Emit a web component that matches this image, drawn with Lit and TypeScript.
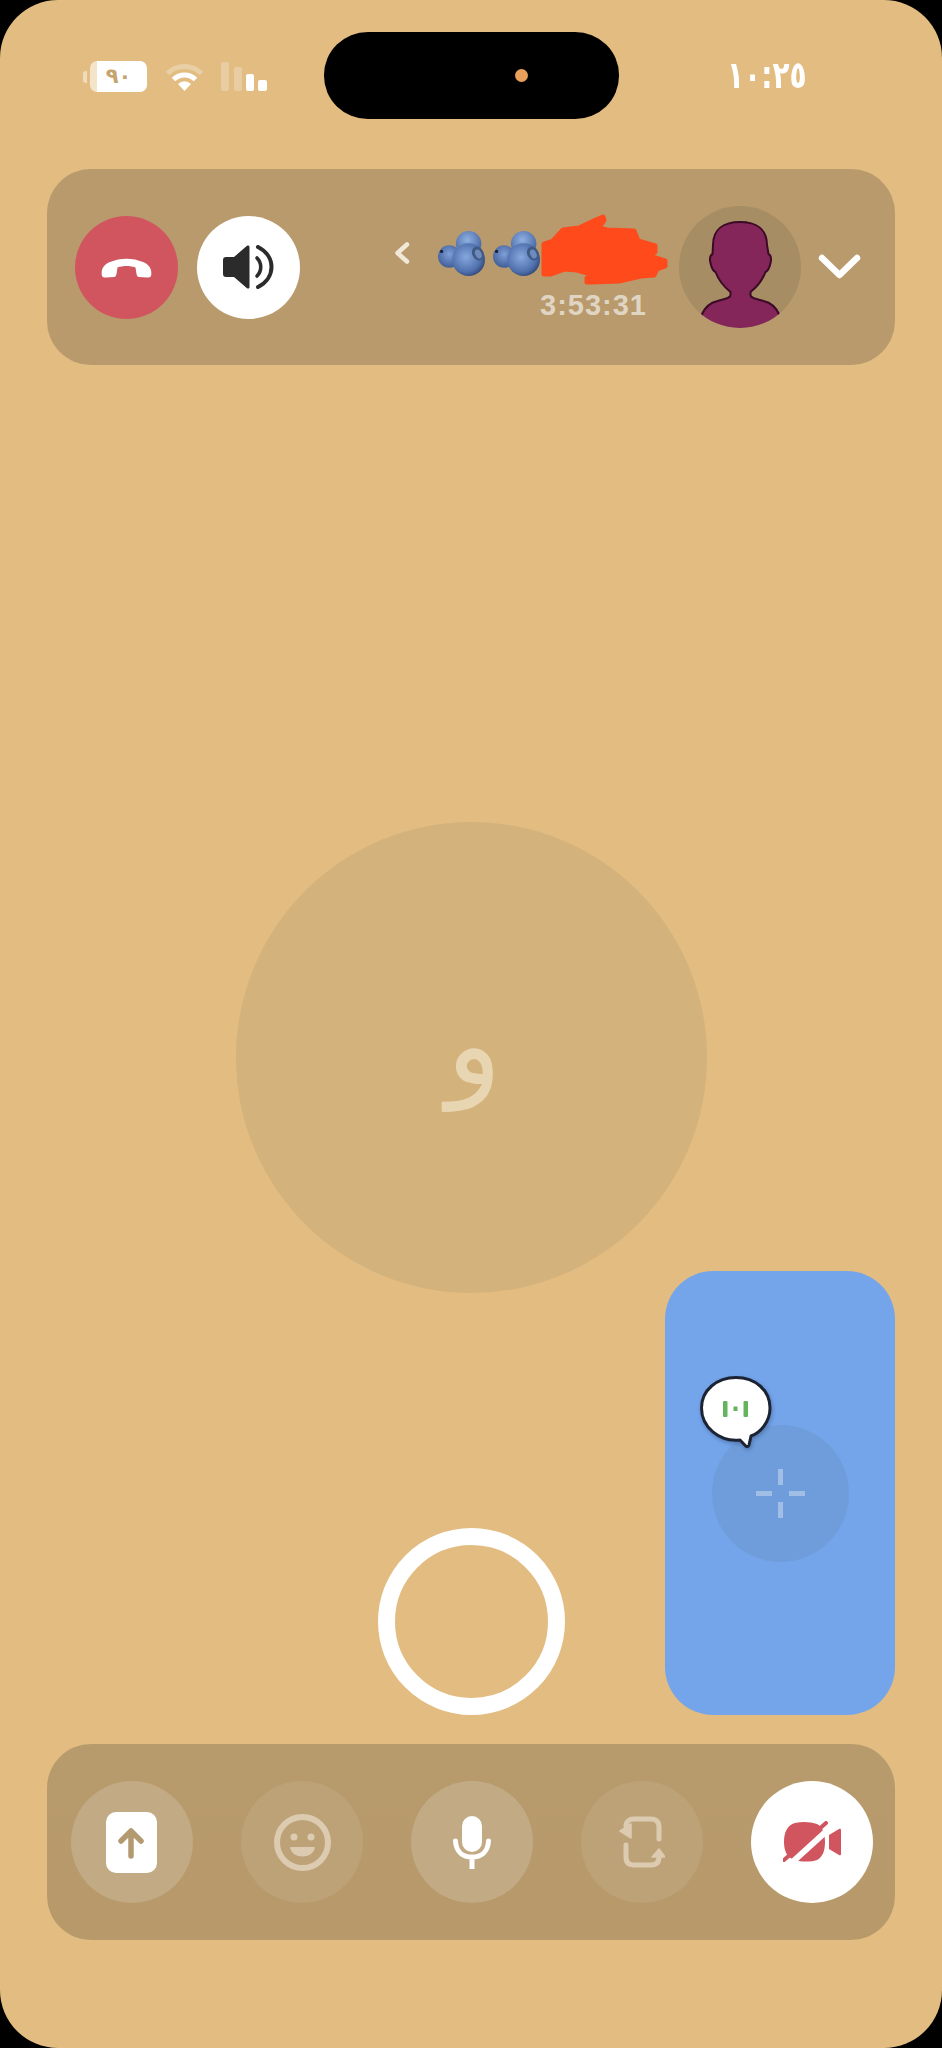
import { LitElement, html, css, svg } from 'lit';
import { customElement } from 'lit/decorators.js';

const berry = () => html`
  <svg class="berry" width="48" height="45" viewBox="0 0 47 44">
    <circle cx="30" cy="12.500" r="12.500" fill="url(#bTop)"/>
    <circle cx="11" cy="25" r="11" fill="url(#bLeft)"/>
    <circle cx="30" cy="28" r="16" fill="url(#bMain)"/>
    <ellipse cx="39" cy="22" rx="5.500" ry="7" fill="#3f5a85" transform="rotate(-25 39 22)"/>
    <ellipse cx="39.500" cy="22.500" rx="3" ry="4.500" fill="#6d8cbd" transform="rotate(-25 39.500 22.500)"/>
    <circle cx="3.500" cy="20" r="1.600" fill="#16233f"/>
  </svg>`;

@customElement('app-root')
export class AppRoot extends LitElement {
  static styles = css`
    :host {
      display: block;
      background: #000;
      font-family: "Liberation Sans", Arial, sans-serif;
    }
    .screen {
      height: 2048px;
      box-sizing: border-box;
      padding-bottom: 108px;
      background: #e2bc80;
      border-radius: 58px;
      display: flex;
      flex-direction: column;
      overflow: hidden;
    }

    /* status bar */
    .status {
      display: grid;
      grid-template-columns: 324px 295px 1fr;
      padding-top: 32px;
      height: 87px;
      flex: none;
    }
    .status-left {
      display: flex;
      align-items: flex-start;
      padding: 29px 0 0 83px;
    }
    .battery {
      display: flex;
      align-items: center;
      height: 31px;
    }
    .battery .nub {
      width: 4px;
      height: 12px;
      background: #efdcbd;
      border-radius: 3px 0 0 3px;
      margin-right: 3px;
    }
    .battery .cell {
      width: 57px;
      height: 31px;
      border-radius: 7px;
      background: linear-gradient(90deg, #f3e4ca 0 12%, #fff 12%);
      color: #c5a470;
      font: bold 21px "DejaVu Sans", sans-serif;
      display: flex;
      align-items: center;
      justify-content: center;
      line-height: 1;
    }
    .wifi { margin: 1px 0 0 18px; }
    .signal { margin: 1px 0 0 17px; }
    .island {
      background: #000;
      border-radius: 44px / 43px;
      display: flex;
      align-items: center;
      justify-content: flex-end;
      padding-right: 91px;
    }
    .island i {
      width: 13px;
      height: 13px;
      border-radius: 50%;
      background: #e9a05a;
    }
    .clock {
      padding: 26px 0 0 108px;
      color: #fff;
      font: bold 28px/36px "DejaVu Sans", sans-serif;
      white-space: nowrap;
    }
    .clock span {
      display: inline-block;
      transform: scale(1, 1.35);
      letter-spacing: -.5px;
    }

    /* panels */
    .panel {
      flex: none;
      height: 196px;
      margin: 0 47px;
      border-radius: 44px;
      background: #b89a6c;
      display: flex;
      align-items: center;
      box-sizing: border-box;
    }
    .top {
      margin-top: 50px;
      padding-left: 28px;
      padding-right: 34px;
    }
    .round {
      width: 103px;
      height: 103px;
      border-radius: 50%;
      display: flex;
      align-items: center;
      justify-content: center;
      flex: none;
    }
    .hangup { background: #d1555f; }
    .speaker { background: #fff; margin-left: 19px; }
    .caller {
      margin-left: auto;
      display: flex;
      flex-direction: column;
      align-items: flex-end;
      margin-top: -3px;
    }
    .name {
      display: flex;
      align-items: center;
      height: 71px;
    }
    .back { margin: 6px 28px 0 0; }
    .berry { margin: 8px 7px 0 0; display: block; }
    .berry + .berry { margin-right: 0; }
    .scribble { display: block; }
    .timer {
      margin: 8px 21px 0 0;
      color: #e0d5c2;
      font-size: 29px;
      font-weight: bold;
      line-height: 24px;
      letter-spacing: 1px;
    }
    .avatar {
      width: 122px;
      height: 122px;
      border-radius: 50%;
      background: #a68d64;
      overflow: hidden;
      margin-left: 11px;
      flex: none;
    }
    .avatar svg { display: block; }
    .down { margin-left: 17px; flex: none; }

    /* stage */
    .stage {
      flex: 1;
      position: relative;
      display: flex;
      flex-direction: column;
      align-items: center;
    }
    .peer {
      width: 471px;
      height: 471px;
      margin-top: 457px;
      border-radius: 50%;
      background: #d4b27b;
      color: #e8d5b2;
      display: flex;
      align-items: center;
      justify-content: center;
      font: 114px/1 "DejaVu Sans", sans-serif;
      flex: none;
    }
    .peer span { margin: -26px 0 0 6px; }
    .ring {
      width: 187px;
      height: 187px;
      margin-top: 235px;
      box-sizing: border-box;
      border: 17px solid #fff;
      border-radius: 50%;
      flex: none;
    }
    .pip {
      position: absolute;
      top: 906px;
      right: 47px;
      width: 230px;
      height: 444px;
      border-radius: 48px;
      background: #74a5eb;
      display: flex;
      align-items: center;
      justify-content: center;
    }
    .pip-circle {
      width: 137px;
      height: 137px;
      border-radius: 50%;
      background: #6f9ddc;
      display: flex;
      align-items: center;
      justify-content: center;
    }
    .bubble {
      position: absolute;
      left: 34px;
      top: 104px;
      filter: drop-shadow(1px 2px 2px rgba(30, 50, 90, .35));
    }

    /* bottom bar */
    .bottom {
      margin-top: 27px;
      padding: 0 22px 0 24px;
      justify-content: space-between;
      background: linear-gradient(180deg, #b89b6d, #b7996a);
    }
    .ctrl {
      width: 122px;
      height: 122px;
      border-radius: 50%;
      display: flex;
      align-items: center;
      justify-content: center;
      flex: none;
      background: #bda278;
    }
    .ctrl.on { background: #c1aa84; }
    .ctrl.white { background: #fff; }
    .card { margin-left: -1px; }
  `;

  render() {
    return html`
      <div class="screen">
        <div class="status">
          <div class="status-left">
            <div class="battery">
              <span class="nub"></span>
              <span class="cell">٩٠</span>
            </div>
            <svg class="wifi" width="39" height="29" viewBox="0 0 39 29" fill="none">
              <path d="M2.500 11.500a24 24 0 0 1 34 0" stroke="#e9cfa6" stroke-width="5"/>
              <path d="M8.500 17.500a15.500 15.500 0 0 1 22 0" stroke="#fff" stroke-width="5"/>
              <path d="M13 22a9 9 0 0 1 13 0l-6.500 7z" fill="#fff"/>
            </svg>
            <svg class="signal" width="46" height="29" viewBox="0 0 46 29">
              <rect x="0" y="0" width="8" height="29" rx="2" fill="#e8cda2"/>
              <rect x="13" y="5" width="8" height="24" rx="2" fill="#e8cda2"/>
              <rect x="25" y="12" width="8" height="17" rx="2" fill="#fff"/>
              <rect x="37" y="18" width="9" height="11" rx="2" fill="#fff"/>
            </svg>
          </div>
          <div class="island"><i></i></div>
          <div class="clock"><span>١٠:٢٥</span></div>
        </div>

        <div class="panel top">
          <div class="round hangup">
            <svg width="51" height="21" viewBox="0 0 51 21">
              <path fill="#fff" d="M1 19C-.5 12 3 7.500 9 5 19 .5 32 .5 42 5c6 2.500 9.500 7 8 14-.5 1.500-2 1.500-4 1.500L38 20c-1.500 0-2-1-2.500-3l-1-6.500c-5.500-2-12.500-2-18 0l-1 6.500c-.5 2-1 3-2.500 3l-8 .5c-2 0-3.500 0-4-1.500z"/>
            </svg>
          </div>
          <div class="round speaker">
            <svg width="51" height="44" viewBox="0 0 51 44">
              <path fill="#2b2b2b" d="M3 12h8L24 .8c1-.8 2.500-.3 2.500 1.200v40c0 1.500-1.500 2-2.500 1.200L11 32H3c-2 0-3-1-3-3V15c0-2 1-3 3-3z"/>
              <path fill="none" stroke="#2b2b2b" stroke-width="3.600" stroke-linecap="round" d="M34 13c5 5 5 13 0 18"/>
              <path fill="none" stroke="#2b2b2b" stroke-width="4" stroke-linecap="round" d="M35 2c18 9 18 31 0 40"/>
            </svg>
          </div>
          <div class="caller">
            <div class="name">
              <svg class="back" width="16" height="22" viewBox="0 0 16 22" fill="none">
                <path d="M13 2.500 3.500 11l9.500 8.500" stroke="#f1e8d8" stroke-width="4.500" stroke-linecap="round" stroke-linejoin="round"/>
              </svg>
              <svg width="0" height="0" style="position:absolute">
                <defs>
                  <radialGradient id="bMain" cx=".42" cy=".42" r=".65">
                    <stop offset="0" stop-color="#86a8dc"/><stop offset=".7" stop-color="#4f70ad"/><stop offset="1" stop-color="#2e416f"/>
                  </radialGradient>
                  <radialGradient id="bTop" cx=".45" cy=".35" r=".7">
                    <stop offset="0" stop-color="#8fb0e2"/><stop offset="1" stop-color="#3f5e9a"/>
                  </radialGradient>
                  <radialGradient id="bLeft" cx=".5" cy=".4" r=".7">
                    <stop offset="0" stop-color="#7f9fd8"/><stop offset="1" stop-color="#35528b"/>
                  </radialGradient>
                </defs>
              </svg>
              ${berry()}${berry()}
              <svg class="scribble" width="127" height="71" viewBox="0 0 127 71">
                <path fill="#ff4a1c" stroke="#ff4a1c" stroke-width="5" stroke-linejoin="round" d="M3 30 12 27 22 16 38 14 55 6 62 3 63 6 58 14 66 16 93 17 97 27 114 32 114 38 108 42 124 47 124 52 116 55 113 61 100 62 78 67 50 68 46 68 46 64 50 60 36 56 24 55 10 60 3 60Z"/>
              </svg>
            </div>
            <div class="timer">3:53:31</div>
          </div>
          <div class="avatar">
            <svg width="122" height="122" viewBox="0 0 122 122">
              <path fill="#84265a" stroke="#3a0a26" stroke-width="2" d="M61 16C45 16 34 23 34 39L33.500 48c-3 1.500-3 5-2 9 1 5 3 8 5 9 3 8 10 16 15 20v3c0 3-5 4-13 6-7 1.500-13 7-16 14l10 20h58l10-20c-3-7-9-12.500-16-14-8-2-13-3-13-6v-3c5-4 12-12 15-20 2-1 4-4 5-9 1-4 1-7.500-2-9L88 39C88 23 77 16 61 16z"/>
            </svg>
          </div>
          <svg class="down" width="43" height="26" viewBox="0 0 43 26" fill="none">
            <path d="M4 4 21.500 21 39 4" stroke="#fff" stroke-width="6.500" stroke-linecap="round" stroke-linejoin="round"/>
          </svg>
        </div>

        <div class="stage">
          <div class="peer"><span>و</span></div>
          <div class="ring"></div>
          <div class="pip">
            <div class="pip-circle">
              <svg width="49" height="49" viewBox="0 0 49 49" fill="#a1bee6">
                <rect x="22" y="0" width="5" height="16"/>
                <rect x="22" y="33" width="5" height="16"/>
                <rect x="0" y="22" width="16" height="5"/>
                <rect x="33" y="22" width="16" height="5"/>
              </svg>
            </div>
            <svg class="bubble" width="74" height="74" viewBox="0 0 74 74">
              <path fill="#fff" stroke="#1c2433" stroke-width="3" stroke-linejoin="round" d="M37 2.500C56 2.500 71 15 71 33 71 47 61 58 52 61L50 70c-.5 2-2.500 2-3.500.8L41 65C20 67 2.500 52 2.500 33 2.500 15 18 2.500 37 2.500z"/>
              <rect x="24" y="26" width="4.500" height="16" rx="1" fill="#66b35e"/>
              <rect x="34.500" y="31.500" width="4" height="4.500" fill="#66b35e"/>
              <rect x="44.500" y="26" width="4.500" height="16" rx="1" fill="#66b35e"/>
            </svg>
          </div>
        </div>

        <div class="panel bottom">
          <div class="ctrl on">
            <svg class="card" width="51" height="61" viewBox="0 0 51 61">
              <rect width="51" height="61" rx="10" fill="#fff"/>
              <path d="M25 44V21M15 29l10-10 10 10" fill="none" stroke="#b39a70" stroke-width="5.500" stroke-linecap="round" stroke-linejoin="round"/>
            </svg>
          </div>
          <div class="ctrl">
            <svg width="57" height="57" viewBox="0 0 57 57">
              <circle cx="28.500" cy="28.500" r="25.500" fill="none" stroke="#dccbb0" stroke-width="6"/>
              <circle cx="20" cy="23" r="3.500" fill="#dccbb0"/>
              <circle cx="37" cy="23" r="3.500" fill="#dccbb0"/>
              <path d="M17 33h23c.8 0 1 .6.8 1.300C39 40 34.500 42.500 28.500 42.500S18 40 16.200 34.300C16 33.600 16.200 33 17 33z" fill="#dccbb0"/>
            </svg>
          </div>
          <div class="ctrl on">
            <svg width="38" height="53" viewBox="0 0 38 53">
              <rect x="9" y="0" width="20" height="36" rx="10" fill="#fff"/>
              <path d="M2.500 25C3 36 10 41 19 41s16-5 16.500-16M19 41v12" fill="none" stroke="#fff" stroke-width="5" stroke-linecap="round"/>
            </svg>
          </div>
          <div class="ctrl">
            <svg width="46" height="52" viewBox="0 0 46 52" fill="none">
              ${svg`
                <path d="M7 10C7 5.500 10 3 15 3H32C37 3 40 6 40 11V23" stroke="#dccbb0" stroke-width="5" stroke-linecap="round"/>
                <path d="M7 29V41C7 46.500 10 49 15 49H32C37 49 40 46.500 40 41V38" stroke="#dccbb0" stroke-width="5" stroke-linecap="round"/>
                <path d="M1 15 12 8V22Z" fill="#dccbb0" stroke="#dccbb0" stroke-width="1.500" stroke-linejoin="round"/>
                <path d="M40 33 46 41H33Z" fill="#dccbb0" stroke="#dccbb0" stroke-width="1.500" stroke-linejoin="round"/>
              `}
            </svg>
          </div>
          <div class="ctrl white">
            <svg width="58" height="42" viewBox="0 0 58 42">
              <path fill="#d1555f" d="M12 2C20 0 28 1 34 3 40 6 42 13 42 21s-2 15-8 18C28 41 18 41 12 39 4 37 1 30 1 21S4 4 12 2z"/>
              <path fill="#d1555f" d="M46 14 56 8c1-.6 2 0 2 1v24c0 1-1 1.600-2 1l-10-6z"/>
              <path d="M4 46 48 6" stroke="#fff" stroke-width="6"/>
              <path d="M1 39 43 2" stroke="#d1555f" stroke-width="4" stroke-linecap="round"/>
            </svg>
          </div>
        </div>
      </div>
    `;
  }
}
